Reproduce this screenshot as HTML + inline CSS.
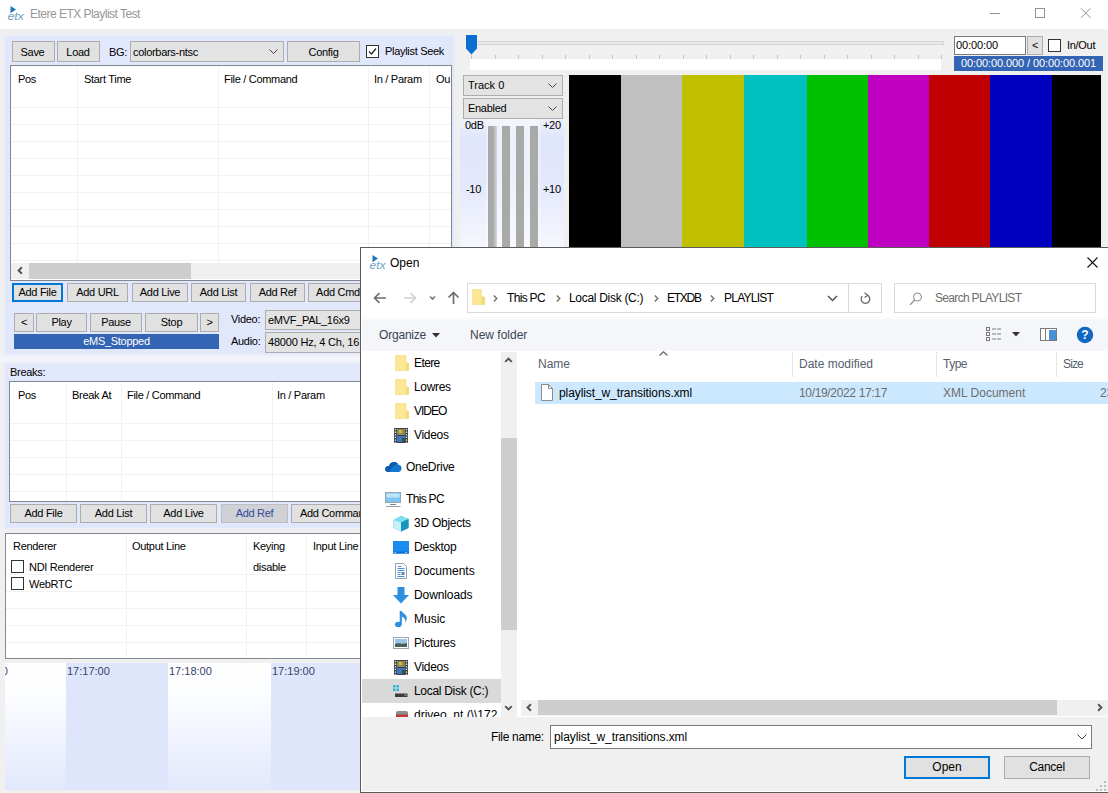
<!DOCTYPE html>
<html lang="en">
<head>
<meta charset="utf-8">
<title>Etere ETX Playlist Test</title>
<style>
*{box-sizing:border-box;margin:0;padding:0}
html,body{width:1108px;height:793px;overflow:hidden;background:#f0f0f0}
body{position:relative;font-family:"Liberation Sans",sans-serif;font-size:11px;color:#000;line-height:13px;letter-spacing:-0.3px}
.a{position:absolute;white-space:nowrap}
.btn{position:absolute;background:#e1e1e1;border:1px solid #adadad;text-align:center;white-space:nowrap;font-size:11px;line-height:19px;height:21px;overflow:hidden}
.cmb{position:absolute;background:#e3e3e3;border:1px solid #adadad;white-space:nowrap;font-size:11px;line-height:19px;height:21px;padding-left:2px;overflow:hidden}
.cmb svg{position:absolute;right:5px;top:7px}
.lst{position:absolute;background:#fff;border:1px solid #82878f;overflow:hidden}
.hl{position:absolute;left:0;right:0;height:1px;background:#f2f2f2}
.vl{position:absolute;top:0;bottom:0;width:1px;background:#f2f2f2}
.chk{position:absolute;width:13px;height:13px;border:1px solid #333;background:#fff}
.t{position:absolute;white-space:nowrap}
/* dialog */
#dlg{letter-spacing:0;position:absolute;left:361px;top:248px;width:748px;height:544px;background:#fff;border:1px solid #fff;box-shadow:0 0 0 1px #5c5c5c;font-size:12px;line-height:16px;color:#000;overflow:hidden}
#dlg .a{font-size:12px}
.nav{position:absolute;white-space:nowrap;font-size:12px;line-height:16px;margin-top:1px}
</style>
</head>
<body>
<!-- ===== main window title bar ===== -->
<div class="a" id="tbar" style="left:0;top:0;width:1108px;height:29px;background:#fff"></div>
<svg class="a" style="left:7px;top:5px" width="18" height="17" viewBox="0 0 18 17">
  <path d="M3.5 1 L9 4.6 L3.5 8.2 Z" fill="#1b78b8"/>
  <text x="0.5" y="15" font-family="Liberation Sans, sans-serif" font-style="italic" font-size="11" fill="#6fa3bd" textLength="16" lengthAdjust="spacingAndGlyphs">etx</text>
</svg>
<div class="a" id="ttl" style="left:30px;top:7px;font-size:12px;line-height:14px;color:#969696;letter-spacing:-0.52px">Etere ETX Playlist Test</div>
<svg class="a" style="left:990px;top:8px" width="110" height="12" viewBox="0 0 110 12">
  <path d="M0 5.500 H10" stroke="#909090" stroke-width="1" fill="none"/>
  <rect x="45.500" y="0.500" width="9" height="9" stroke="#909090" stroke-width="1" fill="none"/>
  <path d="M91 0.300 L100.500 9.800 M100.500 0.300 L91 9.800" stroke="#909090" stroke-width="1" fill="none"/>
</svg>

<!-- ===== left panel ===== -->
<div class="a" id="lp" style="left:5px;top:36px;width:449px;height:492px;background:#e2e8fb;box-shadow:0 0 3px 1px #e9edfb"></div>

<div class="a" style="left:0;top:353px;width:456px;height:12px;background:linear-gradient(180deg,rgba(243,244,250,0),rgba(243,244,250,1) 35%,rgba(243,244,250,1) 65%,rgba(243,244,250,0))"></div>
<div class="btn" style="left:12px;top:41px;width:43px;line-height:21px;padding-right:2px">Save</div>
<div class="btn" style="left:57px;top:41px;width:43px;line-height:21px;padding-right:1px">Load</div>
<div class="t" style="left:109px;top:46px">BG:</div>
<div class="cmb" style="left:130px;top:41px;width:154px;line-height:21px">colorbars-ntsc<svg width="9" height="6" viewBox="0 0 9 6"><path d="M0.5 0.5 L4.5 4.5 L8.5 0.5" stroke="#444" fill="none"/></svg></div>
<div class="btn" style="left:287px;top:41px;width:73px;line-height:21px">Config</div>
<div class="chk" style="left:366px;top:45px"><svg width="11" height="11" viewBox="0 0 11 11" style="display:block"><path d="M2 5.5 L4.5 8 L9 2.5" stroke="#222" stroke-width="1.2" fill="none"/></svg></div>
<div class="t" style="left:385px;top:45px">Playlist Seek</div>

<!-- playlist list -->
<div class="lst" id="pl" style="left:10px;top:65px;width:442px;height:216px">
  <div class="vl" style="left:66px;bottom:17px"></div><div class="vl" style="left:207px;bottom:17px"></div><div class="vl" style="left:357px;bottom:17px"></div><div class="vl" style="left:418px;bottom:17px"></div>
  <div class="hl" style="top:41px"></div><div class="hl" style="top:58px"></div><div class="hl" style="top:75px"></div><div class="hl" style="top:92px"></div><div class="hl" style="top:109px"></div><div class="hl" style="top:126px"></div><div class="hl" style="top:143px"></div><div class="hl" style="top:160px"></div><div class="hl" style="top:177px"></div><div class="hl" style="top:194px"></div>
  <div class="t" style="left:7px;top:7px">Pos</div>
  <div class="t" style="left:73px;top:7px">Start Time</div>
  <div class="t" style="left:213px;top:7px">File / Command</div>
  <div class="t" style="left:363px;top:7px">In / Param</div>
  <div class="t" style="left:425px;top:7px">Ou</div>
  <div class="a" style="left:0;top:197px;width:441px;height:16px;background:#f0f0f0"></div>
  <div class="a" style="left:18px;top:197px;width:162px;height:16px;background:#cdcdcd"></div>
  <svg class="a" style="left:6px;top:200px" width="6" height="9" viewBox="0 0 6 9"><path d="M4.900 1.200 L1.600 4.500 L4.900 7.800" stroke="#555" stroke-width="2" fill="none"/></svg>
</div>

<div class="btn" style="left:12px;top:283px;width:51px;border:2px solid #0078d7;line-height:15px;height:19px">Add File</div>
<div class="btn" style="left:67px;top:283px;height:19px;line-height:17px;width:61px">Add URL</div>
<div class="btn" style="left:132px;top:283px;height:19px;line-height:17px;width:56px">Add Live</div>
<div class="btn" style="left:191px;top:283px;height:19px;line-height:17px;width:55px">Add List</div>
<div class="btn" style="left:250px;top:283px;height:19px;line-height:17px;width:55px">Add Ref</div>
<div class="btn" style="left:308px;top:283px;height:19px;line-height:17px;width:60px">Add Cmd</div>

<div class="btn" style="left:14px;top:313px;height:19px;line-height:17px;width:20px">&lt;</div>
<div class="btn" style="left:36px;top:313px;height:19px;line-height:17px;width:51px">Play</div>
<div class="btn" style="left:90px;top:313px;height:19px;line-height:17px;width:52px">Pause</div>
<div class="btn" style="left:145px;top:313px;height:19px;line-height:17px;width:53px">Stop</div>
<div class="btn" style="left:200px;top:313px;height:19px;line-height:17px;width:19px">&gt;</div>
<div class="t" style="left:231px;top:313px">Video:</div>
<div class="cmb" style="left:265px;top:309.500px;width:110px;height:20px;line-height:18px">eMVF_PAL_16x9</div>
<div class="a" style="left:14px;top:334px;width:205px;height:15px;background:#3465b4;color:#fff;text-align:center;font-size:11px;line-height:15px">eMS_Stopped</div>
<div class="t" style="left:231px;top:335px">Audio:</div>
<div class="cmb" style="left:265px;top:332px;width:110px;letter-spacing:-0.2px">48000 Hz, 4 Ch, 16</div>

<div class="t" style="left:10px;top:366px">Breaks:</div>
<div class="lst" id="bl" style="left:9px;top:381px;width:360px;height:121px">
  <div class="vl" style="left:56px"></div><div class="vl" style="left:111px"></div><div class="vl" style="left:262px"></div>
  <div class="hl" style="top:41px"></div><div class="hl" style="top:58px"></div><div class="hl" style="top:75px"></div><div class="hl" style="top:92px"></div><div class="hl" style="top:109px"></div>
  <div class="t" style="left:8px;top:7px">Pos</div>
  <div class="t" style="left:62px;top:7px">Break At</div>
  <div class="t" style="left:117px;top:7px">File / Command</div>
  <div class="t" style="left:267px;top:7px">In / Param</div>
</div>
<div class="btn" style="left:10px;top:504px;height:19px;line-height:17px;width:67px">Add File</div>
<div class="btn" style="left:80px;top:504px;height:19px;line-height:17px;width:67px">Add List</div>
<div class="btn" style="left:150px;top:504px;height:19px;line-height:17px;width:67px">Add Live</div>
<div class="btn" style="left:221px;top:504px;height:19px;line-height:17px;width:67px;background:#d0d1d7;border-color:#bdbec6;color:#2f4a96">Add Ref</div>
<div class="btn" style="left:291px;top:504px;height:19px;line-height:17px;width:80px;text-align:left;padding-left:8px">Add Command</div>

<!-- renderer list -->
<div class="lst" id="rl" style="left:5px;top:533px;width:365px;height:126px;border-color:#82878f">
  <div class="vl" style="left:120px"></div><div class="vl" style="left:240px"></div><div class="vl" style="left:300px"></div>
  <div class="hl" style="top:40px"></div><div class="hl" style="top:57px"></div><div class="hl" style="top:74px"></div><div class="hl" style="top:91px"></div><div class="hl" style="top:108px"></div>
  <div class="t" style="left:7px;top:6px">Renderer</div>
  <div class="t" style="left:126px;top:6px">Output Line</div>
  <div class="t" style="left:247px;top:6px">Keying</div>
  <div class="t" style="left:307px;top:6px">Input Line</div>
  <div class="chk" style="left:5px;top:26px"></div><div class="t" style="left:23px;top:27px">NDI Renderer</div>
  <div class="t" style="left:247px;top:27px">disable</div>
  <div class="chk" style="left:5px;top:43px"></div><div class="t" style="left:23px;top:44px">WebRTC</div>
</div>

<!-- timeline -->
<div class="a" id="tl" style="left:5px;top:663px;width:365px;height:127px;overflow:hidden;background:#dfe6fc;letter-spacing:0;color:#35436a">
  <div class="a" style="left:0;top:0;width:61px;height:126px;background:linear-gradient(180deg,#ffffff 0,#fcfdff 25%,#e2e8fc 100%)"></div>
  <div class="a" style="left:163px;top:0;width:103px;height:126px;background:linear-gradient(180deg,#ffffff 0,#fcfdff 25%,#e2e8fc 100%)"></div>
  <div class="t" style="left:-40px;top:2px">17:16:00</div>
  <div class="t" style="left:62px;top:2px">17:17:00</div>
  <div class="t" style="left:164px;top:2px">17:18:00</div>
  <div class="t" style="left:267px;top:2px">17:19:00</div>
</div>

<!-- ===== right: slider / time ===== -->
<div class="a" style="left:476px;top:41px;width:468px;height:4px;background:#e7eaea;border:1px solid #d6d6d6"></div>
<div class="a" id="wbar" style="left:470px;top:59px;width:471px;height:11px;background:#fff"></div>
<svg class="a" style="left:466px;top:34px" width="480" height="26" viewBox="0 0 480 26">
  <path d="M0 1 H11 V14.500 L5.500 20.500 L0 14.500 Z" fill="#0a6fd0"/>
  <g stroke="#c4c4c4" stroke-width="1" id="ticks">
    <path d="M5.5 21v4M29.5 21v4M52.5 21v4M76.5 21v4M99.5 21v4M123.5 21v4M146.5 21v4M170.5 21v4M193.5 21v4M217.5 21v4M240.5 21v4M264.5 21v4M287.5 21v4M311.5 21v4M334.5 21v4M358.5 21v4M381.5 21v4M405.5 21v4M428.5 21v4M452.5 21v4M475.5 21v4"/>
  </g>
</svg>
<div class="a" style="left:954px;top:36px;width:72px;height:19px;background:#fff;border:1px solid #7a7a7a;font-size:11px;line-height:17px;padding-left:1px;letter-spacing:-0.1px">00:00:00</div>
<div class="btn" style="left:1027px;top:36px;width:16px;height:19px;line-height:16px">&lt;</div>
<div class="chk" style="left:1048px;top:39px"></div>
<div class="t" style="left:1067px;top:39px">In/Out</div>
<div class="a" style="left:954px;top:56px;width:149px;height:15px;background:#3465b4;color:#fff;font-size:11px;line-height:15px;text-align:center;letter-spacing:-0.1px">00:00:00.000 / 00:00:00.001</div>

<div class="cmb" style="left:463px;top:75px;width:100px;height:21px;padding-left:4px;letter-spacing:0">Track 0<svg width="9" height="6" viewBox="0 0 9 6"><path d="M0.5 0.5 L4.5 4.5 L8.5 0.5" stroke="#444" fill="none"/></svg></div>
<div class="cmb" style="left:463px;top:98px;width:100px;height:21px;padding-left:4px">Enabled<svg width="9" height="6" viewBox="0 0 9 6"><path d="M0.5 0.5 L4.5 4.5 L8.5 0.5" stroke="#444" fill="none"/></svg></div>
<!-- meters -->
<div class="a" id="mt" style="left:460px;top:119px;width:104px;height:128px;background:linear-gradient(180deg,#eef1fc 0,#dfe5fb 16%,#e5e9fc 55%,#f6f7fd 100%)"></div>
<div class="a" style="left:486px;top:119px;width:54px;height:128px;background:rgba(255,255,255,0.4)"></div>
<div class="a" style="left:488px;top:126px;width:9px;height:121px;background:linear-gradient(90deg,#a8aaa8 0,#a8aaa8 55%,#d6d8de 100%)"></div>
<div class="a" style="left:502px;top:126px;width:8px;height:121px;background:#a8aaa8"></div>
<div class="a" style="left:516px;top:126px;width:8px;height:121px;background:#a8aaa8"></div>
<div class="a" style="left:530px;top:126px;width:8px;height:121px;background:#a8aaa8"></div>
<div class="t" style="left:465px;top:119px;font-size:11px">0dB</div>
<div class="t" style="left:543px;top:119px;font-size:11px">+20</div>
<div class="t" style="left:466px;top:183px;font-size:11px">-10</div>
<div class="t" style="left:543px;top:183px;font-size:11px">+10</div>
<!-- colour bars -->
<div class="a" id="cb" style="left:569px;top:75px;width:532px;height:173px;background:linear-gradient(90deg,#000 0,#000 52px,#c0c0c0 52px,#c0c0c0 113px,#c0c000 113px,#c0c000 175px,#00c0c0 175px,#00c0c0 238px,#00c000 238px,#00c000 299px,#c000c0 299px,#c000c0 360px,#c00000 360px,#c00000 421px,#0000c0 421px,#0000c0 483px,#000 483px)"></div>
<div class="a" style="left:456px;top:247px;width:652px;height:1px;background:#555"></div>
<!-- ===== Open dialog ===== -->
<div id="dlg">
  <!-- title -->
  <svg class="a" style="left:7px;top:5px" width="18" height="17" viewBox="0 0 18 17">
    <path d="M3.5 1 L9 4.6 L3.5 8.2 Z" fill="#1b78b8"/>
    <text x="0.5" y="15" font-family="Liberation Sans, sans-serif" font-style="italic" font-size="11" fill="#6fa3bd" textLength="16" lengthAdjust="spacingAndGlyphs">etx</text>
  </svg>
  <div class="a" style="left:28px;top:6px">Open</div>
  <svg class="a" style="left:725px;top:8px" width="11" height="11" viewBox="0 0 11 11"><path d="M0.5 0.5 L10.5 10.5 M10.5 0.5 L0.5 10.5" stroke="#111" stroke-width="1.1" fill="none"/></svg>
  <!-- nav arrows -->
  <svg class="a" style="left:10px;top:40px" width="95" height="18" viewBox="0 0 95 18">
    <path d="M2.5 9 H14 M7.5 4 L2.5 9 L7.5 14" stroke="#6e6e6e" stroke-width="1.700" fill="none"/>
    <path d="M32 9 H43.500 M38.500 4 L43.500 9 L38.500 14" stroke="#d0d0d0" stroke-width="1.700" fill="none"/>
    <path d="M58 7.500 L60.500 10 L63 7.500" stroke="#777" stroke-width="1.600" fill="none"/>
    <path d="M81.500 15 V3.500 M76.500 8.500 L81.500 3.500 L86.500 8.500" stroke="#6e6e6e" stroke-width="1.700" fill="none"/>
  </svg>
  <!-- address box -->
  <div class="a" id="addr" style="left:105px;top:34px;width:415px;height:30px;border:1px solid #d9d9d9;background:#fff">
    <svg class="a" style="left:4px;top:5px" width="13" height="16" viewBox="0 0 13 16"><path d="M0.500 0.500 H9.500 V8 H12.500 V15.500 H0.500 Z" fill="#fde794" stroke="#f1d26a" stroke-width="0.500"/><rect x="9.500" y="8" width="3" height="7.500" fill="#f3d876"/></svg>
    <div class="a" style="left:39px;top:6px;letter-spacing:-0.68px">This PC</div>
    <div class="a" style="left:101px;top:6px;letter-spacing:-0.30px">Local Disk (C:)</div>
    <div class="a" style="left:199px;top:6px;letter-spacing:-1.28px">ETXDB</div>
    <div class="a" style="left:256px;top:6px;letter-spacing:-0.76px">PLAYLIST</div>
    <svg class="a" style="left:25px;top:10px" width="230" height="9" viewBox="0 0 230 9"><g stroke="#707070" stroke-width="1.400" fill="none"><path d="M0.800 1.500 L3.800 4.500 L0.800 7.500"/><path d="M63.800 1.500 L66.800 4.500 L63.800 7.500"/><path d="M161.800 1.500 L164.800 4.500 L161.800 7.500"/><path d="M217.800 1.500 L220.800 4.500 L217.800 7.500"/></g></svg>
    <svg class="a" style="left:359px;top:11px" width="11" height="7" viewBox="0 0 11 7"><path d="M1 1 L5.500 5.500 L10 1" stroke="#555" stroke-width="1.5" fill="none"/></svg>
    <div class="a" style="left:380px;top:0;width:1px;height:28px;background:#d9d9d9"></div>
    <svg class="a" style="left:391px;top:8px" width="13" height="14" viewBox="0 0 13 14"><path d="M8.500 3.200 A4.300 4.300 0 1 1 3.200 4.200" stroke="#666" stroke-width="1.300" fill="none"/><path d="M5.500 0.800 L8.800 3.300 L5.600 5.600" stroke="#666" stroke-width="1.200" fill="none"/></svg>
  </div>
  <!-- search -->
  <div class="a" id="srch" style="left:532px;top:34px;width:202px;height:30px;border:1px solid #d9d9d9;background:#fff">
    <svg class="a" style="left:14px;top:8px" width="14" height="14" viewBox="0 0 14 14"><circle cx="8.500" cy="5" r="4" stroke="#8a8a8a" stroke-width="1" fill="none"/><path d="M5.700 8 L1 12.800" stroke="#8a8a8a" stroke-width="1.2"/></svg>
    <div class="a" style="left:40px;top:6px;color:#6d6d6d;letter-spacing:-0.68px">Search PLAYLIST</div>
  </div>
  <!-- toolbar -->
  <div class="a" style="left:0;top:67px;width:746px;height:35px;background:linear-gradient(180deg,#fff 0,#f4f6f9 5px,#f4f6f9 100%)"></div>
  <div class="a" style="left:17px;top:78px;color:#3a4354;letter-spacing:-0.20px">Organize</div>
  <svg class="a" style="left:70px;top:84px" width="8" height="5" viewBox="0 0 8 5"><path d="M0 0 H8 L4 4.500 Z" fill="#333"/></svg>
  <div class="a" style="left:108px;top:78px;color:#3a4354">New folder</div>
  <svg class="a" style="left:624px;top:78px" width="36" height="15" viewBox="0 0 36 15">
    <g fill="none" stroke="#7a7a7a" stroke-width="1"><rect x="0.500" y="0.500" width="3" height="3"/><rect x="0.500" y="5.500" width="3" height="3"/><rect x="0.500" y="10.500" width="3" height="3"/><path d="M6 2 H15 M6 7 H15 M6 12 H15" stroke-dasharray="4 1"/></g>
    <path d="M26 5 H34 L30 9.500 Z" fill="#333"/>
  </svg>
  <svg class="a" style="left:678px;top:79px" width="18" height="13" viewBox="0 0 18 13"><rect x="0.500" y="0.500" width="16" height="12" fill="#fff" stroke="#7a7a7a"/><rect x="9" y="2" width="7" height="10" fill="#4a90d9"/><path d="M5.500 1 V12" stroke="#7a7a7a"/></svg>
  <svg class="a" style="left:714px;top:77px" width="18" height="18" viewBox="0 0 18 18"><circle cx="9" cy="9" r="8.200" fill="#1267c4"/><text x="9" y="13.300" text-anchor="middle" font-family="Liberation Sans, sans-serif" font-weight="bold" font-size="12" fill="#fff">?</text></svg>
  <!-- nav pane -->
  <div class="a" id="navp" style="left:0;top:103px;width:156px;height:365px;background:#fff;overflow:hidden">
    <div class="a" style="left:0;top:327px;width:140px;height:24px;background:#d9d9d9"></div>
    <div class="nav" style="left:52px;top:2px;letter-spacing:-0.60px">Etere</div>
    <div class="nav" style="left:52px;top:26px;letter-spacing:-0.33px">Lowres</div>
    <div class="nav" style="left:52px;top:50px;letter-spacing:-1.00px">VIDEO</div>
    <div class="nav" style="left:52px;top:74px;letter-spacing:-0.30px">Videos</div>
    <div class="nav" style="left:44px;top:106px;letter-spacing:-0.27px">OneDrive</div>
    <div class="nav" style="left:44px;top:138px;letter-spacing:-0.68px">This PC</div>
    <div class="nav" style="left:52px;top:162px;letter-spacing:-0.26px">3D Objects</div>
    <div class="nav" style="left:52px;top:186px;letter-spacing:-0.23px">Desktop</div>
    <div class="nav" style="left:52px;top:210px">Documents</div>
    <div class="nav" style="left:52px;top:234px;letter-spacing:-0.10px">Downloads</div>
    <div class="nav" style="left:52px;top:258px">Music</div>
    <div class="nav" style="left:52px;top:282px;letter-spacing:-0.22px">Pictures</div>
    <div class="nav" style="left:52px;top:306px;letter-spacing:-0.30px">Videos</div>
    <div class="nav" style="left:52px;top:330px;letter-spacing:-0.30px">Local Disk (C:)</div>
    <div class="nav" style="left:52px;top:354px">driveo_nt (\\172</div>
    <svg class="a" style="left:0;top:0" width="139" height="365" viewBox="0 0 139 365">
      <!-- folders -->
      <g fill="#fde794" stroke="#f1d26a" stroke-width="0.5">
        <path d="M33.500 3.500 H44 V11 H46.500 V18.500 H33.500 Z"/><path d="M33.500 27.500 H44 V35 H46.500 V42.500 H33.500 Z"/><path d="M33.500 51.500 H44 V59 H46.500 V66.500 H33.500 Z"/>
      </g>
      <g fill="#f3d876"><rect x="44" y="11.500" width="2.500" height="7"/><rect x="44" y="35.500" width="2.500" height="7"/><rect x="44" y="59.500" width="2.500" height="7"/></g>
      <!-- videos (film strip) -->
      <g id="film1">
        <rect x="32" y="76" width="14" height="15" fill="#3b3f45"/>
        <rect x="35" y="77" width="8" height="6" fill="#8d8a52"/><rect x="35" y="84" width="8" height="6" fill="#3f74c2"/>
        <rect x="37" y="78" width="3" height="3" fill="#d6b83a"/><rect x="40" y="86" width="3" height="4" fill="#2e5a2e"/>
        <path d="M33.500 77 V91 M44.500 77 V91" stroke="#e8e8e8" stroke-width="1.400" stroke-dasharray="1.300 1.300"/>
      </g>
      <g id="film2">
        <rect x="32" y="308" width="14" height="15" fill="#3b3f45"/>
        <rect x="35" y="309" width="8" height="6" fill="#8d8a52"/><rect x="35" y="316" width="8" height="6" fill="#3f74c2"/>
        <rect x="37" y="310" width="3" height="3" fill="#d6b83a"/><rect x="40" y="318" width="3" height="4" fill="#2e5a2e"/>
        <path d="M33.500 309 V323 M44.500 309 V323" stroke="#e8e8e8" stroke-width="1.400" stroke-dasharray="1.300 1.300"/>
      </g>
      <!-- onedrive cloud -->
      <path d="M26.500 120 C23.500 120 22.500 117.500 23.500 115.800 C24.300 114.200 26 113.800 27 114 C27.500 111.500 30 109.800 32.500 110 C34.500 110.200 36 111.300 36.700 113 C38.500 112.800 39.700 114.500 39.500 116.500 C39.300 118.500 38 120 36.500 120 Z" fill="#1576d1"/>
      <path d="M23.300 116 C24.300 114.200 26 113.800 27 114 C27.500 111.500 30 109.800 32.500 110 C34 110.200 35 111 35.800 112 C33 112.500 30 114.500 27 120 H26.500 C24 120 22.800 118 23.300 116 Z" fill="#0c5cab"/>
      <!-- this pc -->
      <rect x="23.500" y="140.500" width="15" height="10" fill="#7cc7f3" stroke="#9aa3ab" stroke-width="1"/>
      <rect x="24.500" y="141.500" width="13" height="4" fill="#bfe5fa"/>
      <path d="M28 152.500 H34" stroke="#6a8aa6" stroke-width="1"/><path d="M24 154.500 H38.500" stroke="#a0a0a0" stroke-width="1"/>
      <!-- 3d objects cube -->
      <path d="M31.500 168 L39 164 L46.500 167 V176 L39 179.500 L31.500 176 Z" fill="#2ab3d3"/>
      <path d="M31.500 168 L39 164 L46.500 167 L39 170.500 Z" fill="#7fe0ef"/>
      <path d="M31.500 168 L39 170.500 V179.500 L31.500 176 Z" fill="#c8f0f6"/>
      <path d="M39 170.500 L46.500 167 V176 L39 179.500 Z" fill="#1797bd"/>
      <!-- desktop -->
      <rect x="31" y="189" width="16" height="12.500" fill="#1a8cf0"/><rect x="31" y="199.500" width="16" height="2" fill="#0f6ed0"/>
      <path d="M32.500 200.500 H45.500" stroke="#d8ecff" stroke-width="0.800" stroke-dasharray="1.500 9.500"/>
      <!-- documents -->
      <path d="M33.500 211.500 H41.500 L44.500 214.500 V226.500 H33.500 Z" fill="#fff" stroke="#9aa0a8" stroke-width="1"/>
      <path d="M36 214.500 H39.500 M35.500 216.500 H42.500 M35.500 218.500 H42.500 M35.500 220.500 H38.500 M35.500 222.500 H38.500 M35.500 224.500 H42.500" stroke="#4b8fd8" stroke-width="1"/><rect x="39.500" y="220" width="3" height="3" fill="#5a83b8"/>
      <!-- downloads -->
      <path d="M35.500 235 H42.500 V243 H47 L39 251.500 L31 243 H35.500 Z" fill="#2d8fde"/>
      <!-- music -->
      <ellipse cx="36.300" cy="272.400" rx="3.300" ry="2.700" fill="#2d8fde"/><rect x="37.700" y="259" width="2.100" height="13.500" fill="#2d8fde"/>
      <path d="M38 259 C40 259 41 261 43 262.500 C45.600 264.500 45 268 43.300 270.500 C43.800 267.500 42.500 265.500 39.800 264.700 Z" fill="#2d8fde"/>
      <!-- pictures -->
      <rect x="31.500" y="285.500" width="15" height="11" fill="#fff" stroke="#a0a6ad" stroke-width="1"/>
      <rect x="33" y="287" width="12" height="8" fill="#9cc4e4"/><path d="M33 295 V292 C36 290 39 293 45 291 V295 Z" fill="#4a5f58"/>
      <!-- local disk -->
      <g fill="#28b4e0"><rect x="31" y="333" width="2.500" height="2.500"/><rect x="34.500" y="333" width="2.500" height="2.500"/><rect x="31" y="336.500" width="2.500" height="2.500"/><rect x="34.500" y="336.500" width="2.500" height="2.500"/></g>
      <rect x="33" y="341.500" width="12.500" height="3.500" fill="#3c3c3c"/><rect x="42.500" y="342.500" width="2" height="1" fill="#9adf7a"/>
      <!-- network drive (clipped) -->
      <path d="M34 361 Q34 359 36 359 H44 Q46 359 46 361 V365 H34 Z" fill="#8e8e8e"/><rect x="34" y="362.500" width="12" height="3" fill="#c03a3a"/>
    </svg>
    <!-- scrollbar -->
    <div class="a" style="left:139px;top:0;width:16px;height:365px;background:#f0f0f0"></div>
    <div class="a" style="left:139px;top:86px;width:16px;height:192px;background:#cdcdcd"></div>
    <svg class="a" style="left:142px;top:5px" width="9" height="6" viewBox="0 0 9 6"><path d="M1.200 4.900 L4.500 1.600 L7.800 4.900" stroke="#555" stroke-width="2" fill="none"/></svg>
    <svg class="a" style="left:142px;top:353px" width="9" height="6" viewBox="0 0 9 6"><path d="M1.200 1.100 L4.500 4.400 L7.800 1.100" stroke="#555" stroke-width="2" fill="none"/></svg>
  </div>
  <!-- file list -->
  <div class="a" style="left:176px;top:107px;color:#56606e">Name</div>
  <svg class="a" style="left:297px;top:102px" width="9" height="5" viewBox="0 0 9 5"><path d="M0.500 4.500 L4.500 0.800 L8.500 4.500" stroke="#666" stroke-width="1.300" fill="none"/></svg>
  <div class="a" style="left:437px;top:107px;color:#56606e">Date modified</div>
  <div class="a" style="left:581px;top:107px;color:#56606e;letter-spacing:-0.50px">Type</div>
  <div class="a" style="left:701px;top:107px;color:#56606e;letter-spacing:-0.87px">Size</div>
  <div class="a" style="left:430px;top:103px;width:1px;height:25px;background:#e5e5e5"></div>
  <div class="a" style="left:574px;top:103px;width:1px;height:25px;background:#e5e5e5"></div>
  <div class="a" style="left:694px;top:103px;width:1px;height:25px;background:#e5e5e5"></div>
  <div class="a" id="selrow" style="left:173px;top:133px;width:574px;height:22px;background:#cce8ff"></div>
  <svg class="a" style="left:179px;top:135px" width="12" height="17" viewBox="0 0 12 17"><path d="M0.500 0.500 H7.500 L11.500 4.500 V16.500 H0.500 Z" fill="#fff" stroke="#8c8c8c"/><path d="M7.500 0.500 V4.500 H11.500" fill="none" stroke="#8c8c8c"/></svg>
  <div class="a" style="left:197px;top:136px;letter-spacing:-0.09px">playlist_w_transitions.xml</div>
  <div class="a" style="left:437px;top:136px;color:#6d6d6d;letter-spacing:-0.34px">10/19/2022 17:17</div>
  <div class="a" style="left:581px;top:136px;color:#6d6d6d">XML Document</div>
  <div class="a" style="left:738px;top:136px;color:#6d6d6d">23</div>
  <!-- h scrollbar -->
  <div class="a" style="left:159px;top:451px;width:587px;height:16px;background:#f0f0f0"></div>
  <div class="a" style="left:176px;top:451px;width:519px;height:15px;background:#cdcdcd"></div>
  <svg class="a" style="left:164px;top:454px" width="6" height="9" viewBox="0 0 6 9"><path d="M4.900 1.200 L1.600 4.500 L4.900 7.800" stroke="#555" stroke-width="2" fill="none"/></svg>
  <svg class="a" style="left:735px;top:454px" width="6" height="9" viewBox="0 0 6 9"><path d="M1.100 1.200 L4.400 4.500 L1.100 7.800" stroke="#555" stroke-width="2" fill="none"/></svg>
  <!-- bottom -->
  <div class="a" style="left:0;top:468px;width:746px;height:76px;background:#f0f0f0"></div>
  <div class="a" style="left:129px;top:480px;letter-spacing:-0.32px">File name:</div>
  <div class="a" style="left:188px;top:476px;width:542px;height:24px;background:#fff;border:1px solid #7a7a7a;line-height:22px;padding-left:3px;letter-spacing:-0.09px">playlist_w_transitions.xml</div>
  <svg class="a" style="left:715px;top:485px" width="10" height="6" viewBox="0 0 10 6"><path d="M0.500 0.500 L5 5 L9.500 0.500" stroke="#444" stroke-width="1" fill="none"/></svg>
  <div class="a" style="left:542px;top:507px;width:86px;height:23px;background:#e1e1e1;border:2px solid #0078d7;text-align:center;line-height:19px">Open</div>
  <div class="a" style="left:642px;top:507px;width:86px;height:23px;background:#e1e1e1;border:1px solid #adadad;text-align:center;line-height:21px;letter-spacing:-0.30px">Cancel</div>
  <svg class="a" style="left:734px;top:532px" width="11" height="11" viewBox="0 0 11 11"><g fill="#bcbcbc"><rect x="8" y="0" width="2" height="2"/><rect x="8" y="4" width="2" height="2"/><rect x="8" y="8" width="2" height="2"/><rect x="4" y="4" width="2" height="2"/><rect x="4" y="8" width="2" height="2"/><rect x="0" y="8" width="2" height="2"/></g></svg>
</div>
</body>
</html>
